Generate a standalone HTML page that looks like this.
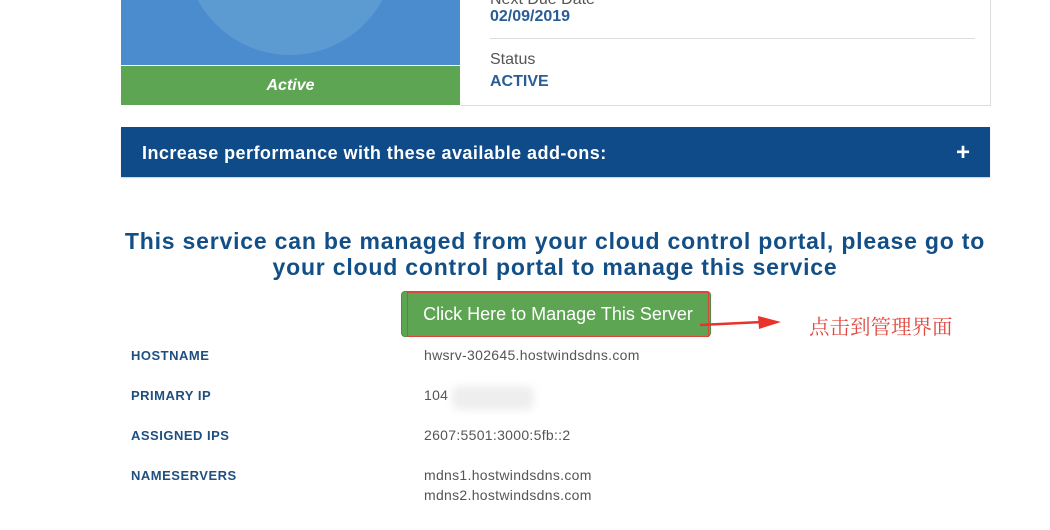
<!DOCTYPE html>
<html><head><meta charset="utf-8"><style>
body{margin:0;width:1050px;height:530px;background:#fff;overflow:hidden;position:relative;font-family:"Liberation Sans",sans-serif;}
.abs{position:absolute}
.lb{font-size:13px;font-weight:bold;color:#1f4f80;letter-spacing:0.5px}
.vl{font-size:14px;color:#555;letter-spacing:0.3px}
</style></head><body>
<div class="abs" style="left:121px;top:0;width:339px;height:66px;background:#4a8ccd;overflow:hidden">
  <div class="abs" style="left:64px;top:-155px;width:210px;height:210px;border-radius:50%;background:#5c9ad2"></div>
</div>
<div class="abs" style="left:121px;top:65px;width:339px;height:1px;background:#fff"></div>
<div class="abs" style="left:121px;top:66px;width:339px;height:39px;background:#5ea553;color:#fff;font-weight:bold;font-style:italic;font-size:16px;text-align:center;line-height:40px">Active</div>
<div class="abs" style="left:460px;top:0;width:530px;height:105px;border-right:1px solid #ddd;border-bottom:1px solid #ddd"></div>
<div class="abs" style="left:490px;top:-9px;font-size:16px;color:#555">Next Due Date</div>
<div class="abs" style="left:490px;top:8px;font-size:16px;font-weight:bold;color:#2a5d94">02/09/2019</div>
<div class="abs" style="left:490px;top:38px;width:485px;height:1px;background:#ddd"></div>
<div class="abs" style="left:490px;top:51px;font-size:16px;color:#555">Status</div>
<div class="abs" style="left:490px;top:73px;font-size:16px;font-weight:bold;color:#2a5d94">ACTIVE</div>
<div class="abs" style="left:121px;top:127px;width:869px;height:50px;background:#0f4b89;color:#fff;font-weight:bold;font-size:18px;line-height:52px;box-shadow:0 1px 1px #ccc">
  <span style="margin-left:21px;letter-spacing:0.45px">Increase performance with these available add-ons:</span>
  <span class="abs" style="right:20px;top:0;font-size:24px">+</span>
</div>
<div class="abs" style="left:90px;top:228px;width:930px;text-align:center;font-size:23px;font-weight:bold;color:#134f87;line-height:26px;letter-spacing:0.8px;white-space:nowrap">This service can be managed from your cloud control portal, please go to<br>your cloud control portal to manage this service</div>
<div class="abs" style="left:401px;top:291px;width:308px;height:44px;background:#5ea553;border-radius:4px;border:1px solid #4e8f45"></div>
<div class="abs" style="left:407px;top:292px;width:300px;height:43px;border:1px solid #d9463a;color:#fff;font-size:18px;line-height:42px;text-align:center">Click Here to Manage This Server</div>
<svg class="abs" style="left:700px;top:313px" width="85" height="20"><path d="M0 12 L62 9" stroke="#e8332a" stroke-width="2.5"/><path d="M58 3 L81 9 L59 16 Z" fill="#e8332a"/></svg>
<div class="abs" style="left:809px;top:310px;font-family:'Liberation Serif','Noto Serif CJK SC',serif;font-size:20.5px;color:#e04a40">点击到管理界面</div>
<div class="abs lb" style="left:131px;top:348px">HOSTNAME</div>
<div class="abs lb" style="left:131px;top:388px">PRIMARY IP</div>
<div class="abs lb" style="left:131px;top:428px">ASSIGNED IPS</div>
<div class="abs lb" style="left:131px;top:468px">NAMESERVERS</div>
<div class="abs vl" style="left:424px;top:347px">hwsrv-302645.hostwindsdns.com</div>
<div class="abs vl" style="left:424px;top:387px">104</div>
<div class="abs" style="left:452px;top:386px;width:82px;height:24px;background:#eee;filter:blur(4px);border-radius:8px"></div>
<div class="abs vl" style="left:424px;top:427px">2607:5501:3000:5fb::2</div>
<div class="abs vl" style="left:424px;top:465px;line-height:20px">mdns1.hostwindsdns.com<br>mdns2.hostwindsdns.com</div>
</body></html>
